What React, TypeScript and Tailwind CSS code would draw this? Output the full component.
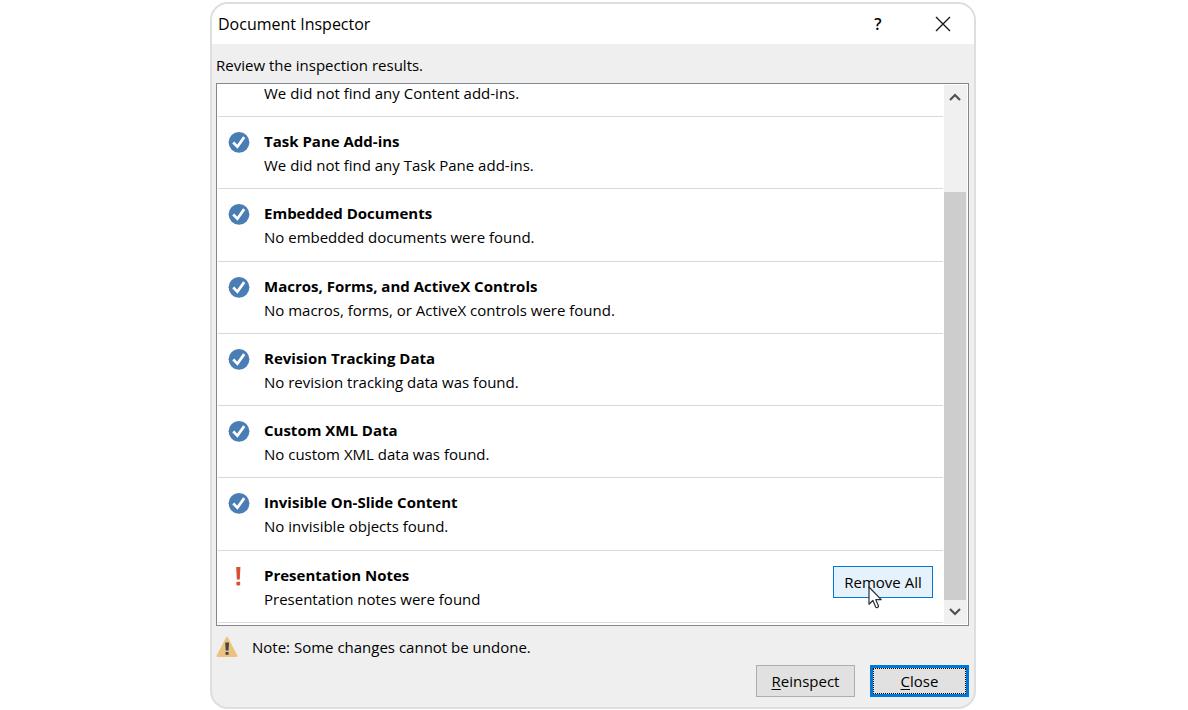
import { useState } from "react";

type Result = {
  title: string;
  message: string;
  found?: boolean;
};

const RESULTS: Result[] = [
  { title: "Task Pane Add-ins", message: "We did not find any Task Pane add-ins." },
  { title: "Embedded Documents", message: "No embedded documents were found." },
  { title: "Macros, Forms, and ActiveX Controls", message: "No macros, forms, or ActiveX controls were found." },
  { title: "Revision Tracking Data", message: "No revision tracking data was found." },
  { title: "Custom XML Data", message: "No custom XML data was found." },
  { title: "Invisible On-Slide Content", message: "No invisible objects found." },
  { title: "Presentation Notes", message: "Presentation notes were found", found: true },
];

function CheckIcon() {
  return (
    <svg viewBox="0 0 22 22" className="size-[22px]" aria-hidden="true">
      <circle cx="11" cy="11.3" r="10.4" fill="#4a7db4" />
      <path d="M5.2 11.5 9.4 15.7 16.2 6.1" fill="none" stroke="#fff" strokeWidth="2.7" />
    </svg>
  );
}

function AlertIcon() {
  return (
    <svg viewBox="0 0 22 22" className="size-[22px]" aria-hidden="true">
      <path d="M8.2 2h4.2l-.6 12.6h-3z" fill="#d8502f" />
      <rect x="8.4" y="16.8" width="3.8" height="3.8" rx="1" fill="#d8502f" />
    </svg>
  );
}

function WarningIcon() {
  return (
    <svg viewBox="0 0 22 22" className="size-[22px] shrink-0" aria-hidden="true">
      <path d="M11 1.6 20.6 20H1.4z" fill="#ebc27f" stroke="#ebc27f" strokeWidth="1.8" strokeLinejoin="round" />
      <path d="M9.2 6.6h3.8l-.5 7.8H9.7z" fill="#444" />
      <rect x="9.5" y="16" width="3.1" height="2.8" fill="#444" />
    </svg>
  );
}

function Cursor() {
  return (
    <svg viewBox="0 0 15 23" className="absolute top-5 left-[35px] h-[23px] w-[15px]" aria-hidden="true">
      <path
        d="M1 1v17.2l3.9-3.7 2.8 6.6c.9 1 3.2.2 2.8-1.2l-2.7-6.2h5.4z"
        fill="#fff"
        stroke="#2b2f3a"
        strokeWidth="1.2"
        strokeLinejoin="round"
      />
    </svg>
  );
}

function ScrollBar() {
  return (
    <div className="my-px mr-px flex w-[23px] shrink-0 flex-col bg-[#f0f0f0]">
      <button type="button" aria-label="Scroll up" className="flex h-6 items-center justify-center pr-px">
        <svg viewBox="0 0 12 8" className="h-2 w-3" aria-hidden="true">
          <path d="M1 7 6 2l5 5" fill="none" stroke="#505050" strokeWidth="2.2" />
        </svg>
      </button>
      <div className="flex flex-1 flex-col justify-end">
        <div className="mr-px h-[83%] bg-[#cdcdcd]" />
      </div>
      <button type="button" aria-label="Scroll down" className="flex h-6 items-center justify-center pr-px">
        <svg viewBox="0 0 12 8" className="h-2 w-3" aria-hidden="true">
          <path d="M1 1l5 5 5-5" fill="none" stroke="#505050" strokeWidth="2.2" />
        </svg>
      </button>
    </div>
  );
}

function ResultRow({ result, onRemove }: { result: Result; onRemove: () => void }) {
  return (
    <li className="flex flex-1 items-start border-b border-[#d9d9d9] px-[10px] pt-3">
      <div className="mt-0.5 mr-[14px]">{result.found ? <AlertIcon /> : <CheckIcon />}</div>
      <div className="min-w-0 flex-1">
        <h2 className="font-bold">{result.title}</h2>
        <p>{result.message}</p>
      </div>
      {result.found && (
        <div className="relative mt-[3px]">
          <button
            type="button"
            onClick={onRemove}
            className="h-8 w-[100px] border border-[#0078d7] bg-[#e5f1fb]"
          >
            Remove All
          </button>
          <Cursor />
        </div>
      )}
    </li>
  );
}

export default function App() {
  const [results, setResults] = useState(RESULTS);

  const removeAll = (title: string) => {
    setResults(results.filter((result) => result.title !== title));
  };

  return (
    <main className="min-h-screen bg-white pt-0.5 pr-0.5 font-['Open_Sans','Segoe_UI',sans-serif] text-[15px] leading-6 text-black">
      <section
        aria-labelledby="dialog-title"
        className="mx-auto w-full max-w-[766px] overflow-hidden rounded-[18px] border-2 border-[#dedede] bg-[#efefef]"
      >
        <header className="flex h-10 items-center bg-white pr-[19px] pb-px pl-1.5">
          <h1 id="dialog-title" className="flex-1 text-base">
            Document Inspector
          </h1>
          <button type="button" aria-label="Help" className="w-6 text-base font-semibold">
            ?
          </button>
          <button type="button" aria-label="Close window" className="ml-[41px] flex w-6 justify-center">
            <svg viewBox="0 0 16 16" className="size-4" aria-hidden="true">
              <path d="M1 1l14 14M15 1L1 15" stroke="#1a1a1a" strokeWidth="1.4" />
            </svg>
          </button>
        </header>

        <div className="pt-[9px] pr-[5px] pb-[10px] pl-1">
          <p className="pb-1.5">Review the inspection results.</p>

          <div className="flex h-[543px] border border-[#828790] bg-white">
            <ul className="mx-px flex flex-1 flex-col overflow-hidden pb-0.5">
              <li className="flex h-[33px] shrink-0 items-end border-b border-[#d9d9d9] pb-[11px] pl-[46px]">
                <p>We did not find any Content add-ins.</p>
              </li>
              {results.map((result) => (
                <ResultRow key={result.title} result={result} onRemove={() => removeAll(result.title)} />
              ))}
            </ul>
            <ScrollBar />
          </div>

          <div className="flex items-center gap-[14px] pt-[9px]">
            <WarningIcon />
            <p>Note: Some changes cannot be undone.</p>
          </div>

          <div className="mt-1.5 flex justify-end gap-[15px]">
            <button type="button" className="h-8 w-[99px] border border-[#adadad] bg-[#e1e1e1]">
              <span className="underline underline-offset-2">R</span>einspect
            </button>
            <button type="button" className="h-8 w-[99px] border-[3px] border-[#0078d7] bg-[#e1e1e1]">
              <span className="flex h-full items-center justify-center border border-dotted border-black">
                <span className="underline underline-offset-2">C</span>lose
              </span>
            </button>
          </div>
        </div>
      </section>
    </main>
  );
}
